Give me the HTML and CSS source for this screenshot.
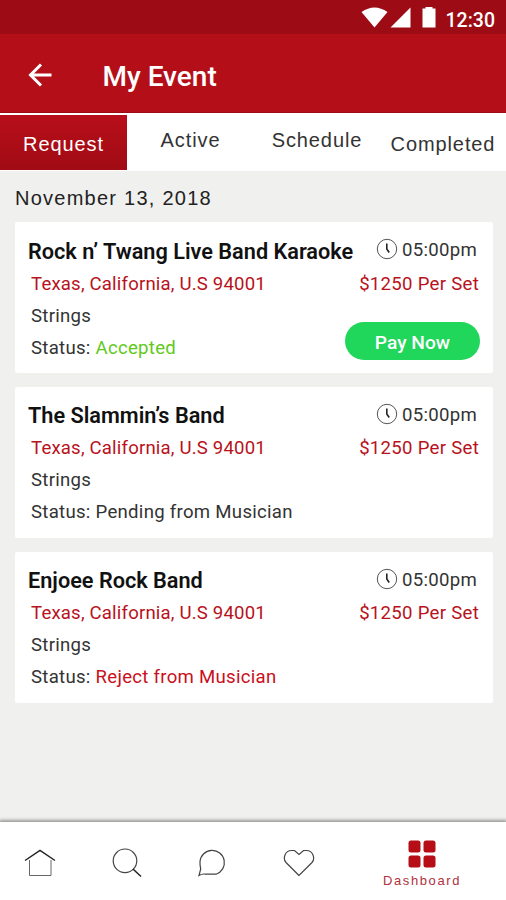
FILE: index.html
```html
<!DOCTYPE html>
<html lang="en">
<head>
    <meta charset="UTF-8">
    <meta name="viewport" content="width=device-width, initial-scale=1.0">
    <title>My Event</title>
    <link rel="stylesheet" href="styles.css">
</head>
<body>
    <div class="status-bar">
        <svg class="wifi-icon" width="27" height="21" viewBox="0 0 27 21"><path d="M0.500 5Q13.500 -4 26.500 5L13.500 20.500Z" fill="#fff"/></svg>
        <svg class="signal-icon" width="21" height="21" viewBox="0 0 21 21"><path d="M0.500 20.500L20.500 0.500V20.500Z" fill="#fff"/></svg>
        <svg class="battery-icon" width="14" height="21" viewBox="0 0 14 21"><path d="M0.500 1.500H3.500V0H10.500V1.500H13.500V20.500H0.500Z" fill="#fff"/></svg>
        <span class="clock">12:30</span>
    </div>

    <header>
        <a href="#" class="back" aria-label="Back">
            <svg width="24" height="24" viewBox="0 0 24 24" fill="none" stroke="#fff" stroke-width="3"><path d="M23.500 12H3M13 1.500L2.500 12L13 22.500"/></svg>
        </a>
        <h1>My Event</h1>
    </header>

    <nav class="tabs">
        <a href="#" class="tab active">Request</a>
        <a href="#" class="tab raised">Active</a>
        <a href="#" class="tab raised">Schedule</a>
        <a href="#" class="tab last">Completed</a>
    </nav>

    <main>
        <h2 class="date">November 13, 2018</h2>

        <section class="event-card">
            <div class="row">
                <h3>Rock n’ Twang Live Band Karaoke</h3>
                <span class="time">
                    <svg width="22" height="22" viewBox="0 0 22 22" fill="none" stroke="#555"><circle cx="11" cy="11" r="9.700"/><path d="M10.800 5.500V11L13.200 14.500" stroke="#222" stroke-width="1.600"/></svg>
                    <span>05:00pm</span>
                </span>
            </div>
            <div class="row red">
                <span class="location">Texas, California, U.S 94001</span>
                <span class="price">$1250 Per Set</span>
            </div>
            <p>Strings</p>
            <p>Status: <span class="accepted">Accepted</span></p>
            <button class="pay">Pay Now</button>
        </section>

        <section class="event-card">
            <div class="row">
                <h3>The Slammin’s Band</h3>
                <span class="time">
                    <svg width="22" height="22" viewBox="0 0 22 22" fill="none" stroke="#555"><circle cx="11" cy="11" r="9.700"/><path d="M10.800 5.500V11L13.200 14.500" stroke="#222" stroke-width="1.600"/></svg>
                    <span>05:00pm</span>
                </span>
            </div>
            <div class="row red">
                <span class="location">Texas, California, U.S 94001</span>
                <span class="price">$1250 Per Set</span>
            </div>
            <p>Strings</p>
            <p>Status: Pending from Musician</p>
        </section>

        <section class="event-card">
            <div class="row">
                <h3>Enjoee Rock Band</h3>
                <span class="time">
                    <svg width="22" height="22" viewBox="0 0 22 22" fill="none" stroke="#555"><circle cx="11" cy="11" r="9.700"/><path d="M10.800 5.500V11L13.200 14.500" stroke="#222" stroke-width="1.600"/></svg>
                    <span>05:00pm</span>
                </span>
            </div>
            <div class="row red">
                <span class="location">Texas, California, U.S 94001</span>
                <span class="price">$1250 Per Set</span>
            </div>
            <p>Strings</p>
            <p>Status: <span class="rejected">Reject from Musician</span></p>
        </section>
    </main>

    <footer class="bottom-nav">
        <a href="#" aria-label="Home">
            <svg width="32" height="30" viewBox="0 0 32 30" fill="none" stroke="#444"><path d="M5.500 12V27.500H27V12" stroke="#666"/><path d="M1 12.500L16 2.500L31 12.500" stroke="#222" stroke-width="1.500"/></svg>
        </a>
        <a href="#" aria-label="Search">
            <svg width="32" height="30" viewBox="0 0 32 30" fill="none" stroke="#444" stroke-width="1.200"><circle cx="14" cy="12.800" r="11.800"/><path d="M22 21L30 28.500" stroke="#222" stroke-width="1.500"/></svg>
        </a>
        <a href="#" aria-label="Messages">
            <svg width="32" height="30" viewBox="0 0 32 30" fill="none" stroke="#444" stroke-width="1.200"><path d="M3 27.500L4.700 21Q3.800 17 4 13.500A12.200 12.200 0 1 1 20 26.200H10Q6 25.500 3 27.500Z"/></svg>
        </a>
        <a href="#" aria-label="Favourites">
            <svg width="32" height="30" viewBox="0 0 32 30" fill="none" stroke="#444" stroke-width="1.200"><path d="M16 27.500L3 14.500C-0.500 10.500 2 2.500 8.500 2.500H11.500L16 6.500L20.500 2.500H23.500C30 2.500 32.500 10.500 29 14.500Z"/></svg>
        </a>
        <a href="#" class="dashboard">
            <svg width="28" height="28" viewBox="0 0 28 28" fill="#b60d16"><rect x="0.500" y="0.500" width="12" height="12" rx="2.500"/><rect x="15.500" y="0.500" width="12" height="12" rx="2.500"/><rect x="0.500" y="15.500" width="12" height="12" rx="2.500"/><rect x="15.500" y="15.500" width="12" height="12" rx="2.500"/></svg>
            <span>Dashboard</span>
        </a>
    </footer>
</body>
</html>
```
FILE: styles.css
```css
:root {
    --primary-color: #b40f19;
    --primary-dark: #9d0c15;
    --background-color: #f0f0ee;
    --text-color: #333;
}

* {
    box-sizing: border-box;
}

body {
    margin: 0;
    height: 900px;
    display: flex;
    flex-direction: column;
    overflow: hidden;
    font-family: Roboto, sans-serif;
    background: var(--background-color);
    color: var(--text-color);
}

a {
    color: inherit;
    text-decoration: none;
}

h1, h2, h3, p {
    margin: 0;
}

svg {
    display: block;
    flex: none;
}

/* Top bars */
.status-bar {
    height: 34px;
    padding: 7px 11px 0 0;
    display: flex;
    justify-content: flex-end;
    align-items: flex-start;
    background: var(--primary-dark);
    color: #fff;
}

.signal-icon {
    margin-left: 2px;
}

.battery-icon {
    margin: 0 10px 0 11px;
}

.clock {
    font-size: 19.5px;
    font-weight: 500;
    line-height: 27px;
}

header {
    height: 79px;
    display: flex;
    align-items: center;
    padding: 4px 0 0 28px;
    background: var(--primary-color);
    border-bottom: 1px solid #9c0b13;
    color: #fff;
}

header h1 {
    margin-left: 50.5px;
    padding-top: 2px;
    font-size: 28px;
    font-weight: 500;
}

/* Tabs */
.tabs {
    height: 58px;
    display: grid;
    grid-template-columns: 127px 127px 126px 126px;
    grid-template-rows: 55px;
    padding-top: 2px;
    background: #fff;
    font-family: "Liberation Sans", sans-serif;
    font-size: 20px;
    letter-spacing: 0.9px;
}

.tab {
    line-height: 59px;
    text-align: center;
}

.tab.active {
    background: linear-gradient(#b80f1a, #a00b14);
    color: #fff;
}

.tab.raised {
    line-height: 51px;
}

/* Events */
main {
    flex: 1;
    padding: 0 13px 0 15px;
}

.date {
    height: 51px;
    font: 20px/54px "Liberation Sans", sans-serif;
    letter-spacing: 1.25px;
    color: #222;
}

.event-card {
    position: relative;
    height: 151px;
    margin-bottom: 13.8px;
    padding: 13.5px 14px 0 16px;
    background: #fff;
    border-radius: 2px;
    font-size: 18.6px;
    line-height: 32px;
    letter-spacing: 0.28px;
}

.row {
    display: flex;
    justify-content: space-between;
    height: 32px;
    white-space: nowrap;
}

.row h3 {
    margin-left: -3px;
    font-size: 21.7px;
    font-weight: 600;
    letter-spacing: 0;
    color: #111;
}

.location {
    letter-spacing: 0.18px;
}

.time {
    display: flex;
    align-items: center;
    gap: 4px;
    height: 29px;
    padding-right: 2px;
}

.time svg {
    margin-top: -2px;
}

.red {
    color: #b8121c;
}

.accepted {
    color: #62c91c;
}

.rejected {
    color: #c9101c;
}

.pay {
    position: absolute;
    right: 13px;
    bottom: 13px;
    width: 135px;
    height: 38px;
    padding: 2px 0 0;
    border: none;
    border-radius: 19px;
    background: #20d65b;
    color: #fff;
    font: 500 19.2px Roboto, sans-serif;
}

/* Bottom navigation */
.bottom-nav {
    height: 78px;
    display: grid;
    grid-template-columns: 79px 96px 74px 99px 148px;
    padding-top: 26px;
    background: #fff;
    box-shadow: 0 -1px 3px 1px #999;
}

.bottom-nav a {
    display: flex;
    flex-direction: column;
    align-items: center;
}

.bottom-nav .dashboard {
    margin-top: -8px;
    gap: 2px;
    font: 13px/22px "Liberation Sans", sans-serif;
    letter-spacing: 1.6px;
    color: #b0303c;
}
```
